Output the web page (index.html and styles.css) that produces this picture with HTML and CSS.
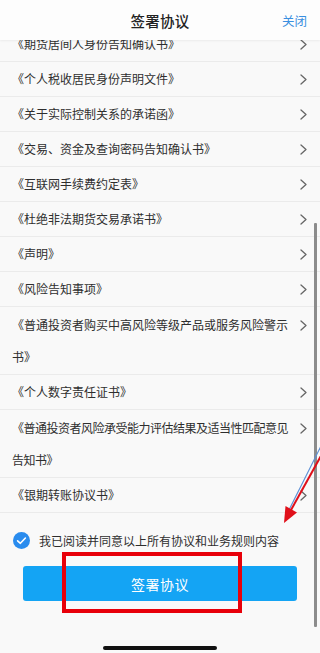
FILE: index.html
```html
<!DOCTYPE html>
<html lang="zh-CN">
<head>
<meta charset="utf-8">
<title>签署协议</title>
<link rel="stylesheet" href="styles.css">
</head>
<body>
<div class="screen">
  <header class="topbar">
    <span class="title">签署协议</span>
    <span class="close">关闭</span>
  </header>
  <div class="viewport">
    <ul class="list">
      <li class="row"><span class="txt">《期货居间人身份告知确认书》</span><svg class="chev" viewBox="0 0 7 11"><path d="M1 1 L6 5.5 L1 10"/></svg></li>
      <li class="row"><span class="txt">《个人税收居民身份声明文件》</span><svg class="chev" viewBox="0 0 7 11"><path d="M1 1 L6 5.5 L1 10"/></svg></li>
      <li class="row"><span class="txt">《关于实际控制关系的承诺函》</span><svg class="chev" viewBox="0 0 7 11"><path d="M1 1 L6 5.5 L1 10"/></svg></li>
      <li class="row"><span class="txt">《交易、资金及查询密码告知确认书》</span><svg class="chev" viewBox="0 0 7 11"><path d="M1 1 L6 5.5 L1 10"/></svg></li>
      <li class="row"><span class="txt">《互联网手续费约定表》</span><svg class="chev" viewBox="0 0 7 11"><path d="M1 1 L6 5.5 L1 10"/></svg></li>
      <li class="row"><span class="txt">《杜绝非法期货交易承诺书》</span><svg class="chev" viewBox="0 0 7 11"><path d="M1 1 L6 5.5 L1 10"/></svg></li>
      <li class="row"><span class="txt">《声明》</span><svg class="chev" viewBox="0 0 7 11"><path d="M1 1 L6 5.5 L1 10"/></svg></li>
      <li class="row"><span class="txt">《风险告知事项》</span><svg class="chev" viewBox="0 0 7 11"><path d="M1 1 L6 5.5 L1 10"/></svg></li>
      <li class="row two"><span class="txt">《普通投资者购买中高风险等级产品或服务风险警示<br>书》</span><svg class="chev" viewBox="0 0 7 11"><path d="M1 1 L6 5.5 L1 10"/></svg></li>
      <li class="row"><span class="txt">《个人数字责任证书》</span><svg class="chev" viewBox="0 0 7 11"><path d="M1 1 L6 5.5 L1 10"/></svg></li>
      <li class="row two"><span class="txt tight">《普通投资者风险承受能力评估结果及适当性匹配意见<br>告知书》</span><svg class="chev" viewBox="0 0 7 11"><path d="M1 1 L6 5.5 L1 10"/></svg></li>
      <li class="row"><span class="txt">《银期转账协议书》</span><svg class="chev" viewBox="0 0 7 11"><path d="M1 1 L6 5.5 L1 10"/></svg></li>
    </ul>
  </div>
  <div class="agree">
    <svg class="check" viewBox="0 0 17 17"><circle cx="8.5" cy="8.5" r="8.5"/><path d="M4.6 8.8 L7.4 11.3 L12.4 6"/></svg>
    <span class="agree-text">我已阅读并同意以上所有协议和业务规则内容</span>
  </div>
  <div class="btn-wrap">
    <button class="sign">签署协议</button>
  </div>
  <div class="home-bar"></div>

  <div class="scrollbar"></div>
  <div class="mark-box"></div>
  <svg class="mark-arrow" viewBox="0 0 320 653" width="320" height="653">
    <line class="blue" x1="321" y1="446" x2="287" y2="514"/>
    <line class="red" x1="322" y1="454" x2="291" y2="510"/>
    <polygon class="red-head" points="284,523 285.5,506 297,512.5"/>
  </svg>
</div>
</body>
</html>
```

FILE: styles.css
```css
* { box-sizing: border-box; }
html, body {
  margin: 0;
  padding: 0;
}
body {
  width: 320px;
  height: 653px;
  overflow: hidden;
  background: #f9f9f9;
  font-family: "Noto Sans CJK SC", "Noto Sans", sans-serif;
  color: #333;
}
.screen {
  position: relative;
  width: 320px;
  height: 653px;
  background: #f9f9f9;
  display: flex;
  flex-direction: column;
}
.topbar {
  position: relative;
  z-index: 2;
  height: 40px;
  flex: none;
  background: #fdfdfd;
  box-shadow: 0 1px 2px rgba(0, 0, 0, 0.06);
  display: flex;
  align-items: center;
  justify-content: center;
}
.title {
  font-size: 14.5px;
  font-weight: 500;
  color: #222;
  letter-spacing: 0.3px;
}
.close {
  position: absolute;
  right: 13px;
  top: 12px;
  font-size: 12.5px;
  color: #3a8fe0;
  line-height: 17px;
}
.viewport {
  height: 473px;
  flex: none;
  overflow: hidden;
}
.list {
  list-style: none;
  margin: -13px 0 0;
  padding: 0;
}
.row {
  display: flex;
  align-items: flex-start;
  justify-content: space-between;
  padding: 1px 13px 1px 12px;
  border-bottom: 1px solid #ebebeb;
  background: #f9f9f9;
}
.row.two {
  padding-top: 1.5px;
  padding-bottom: 1.5px;
}
.txt {
  font-size: 12px;
  line-height: 32px;
  color: #2e2e2e;
}
.txt.tight {
  letter-spacing: -0.5px;
}
.chev {
  flex: none;
  width: 7px;
  height: 11px;
  margin-top: 11px;
  fill: none;
  stroke: #666;
  stroke-width: 1.3;
  stroke-linecap: round;
  stroke-linejoin: round;
}
.agree {
  display: flex;
  align-items: center;
  gap: 9px;
  padding: 19px 0 17px 13px;
  flex: none;
}
.check {
  width: 17px;
  height: 17px;
  flex: none;
}
.check circle { fill: #2a8cee; }
.check path {
  fill: none;
  stroke: #fff;
  stroke-width: 1.6;
  stroke-linecap: round;
  stroke-linejoin: round;
}
.agree-text {
  font-size: 12px;
  line-height: 17px;
  color: #2e2e2e;
}
.btn-wrap {
  padding: 0 23px;
  flex: none;
}
.sign {
  display: block;
  width: 274px;
  height: 35px;
  border: none;
  border-radius: 3px;
  background: #14a4f4;
  color: #fff;
  font-family: "Noto Sans CJK SC", "Noto Sans", sans-serif;
  font-size: 14px;
  letter-spacing: 0.5px;
  padding: 0;
}
.home-bar {
  width: 114px;
  height: 4px;
  border-radius: 2px;
  background: #111;
  margin: 45px auto 0;
  flex: none;
}
.scrollbar {
  position: absolute;
  left: 314px;
  top: 223px;
  width: 2.5px;
  height: 404px;
  background: #8c8c8c;
  border-radius: 1px;
}
.mark-box {
  position: absolute;
  left: 62px;
  top: 552px;
  width: 180px;
  height: 61px;
  border: 4.5px solid #e8000a;
}
.mark-arrow {
  position: absolute;
  left: 0;
  top: 0;
  pointer-events: none;
}
.mark-arrow .blue {
  stroke: #5b8fd6;
  stroke-width: 1.2;
}
.mark-arrow .red {
  stroke: #e0101a;
  stroke-width: 2;
}
.mark-arrow .red-head {
  fill: #e0101a;
}
```
